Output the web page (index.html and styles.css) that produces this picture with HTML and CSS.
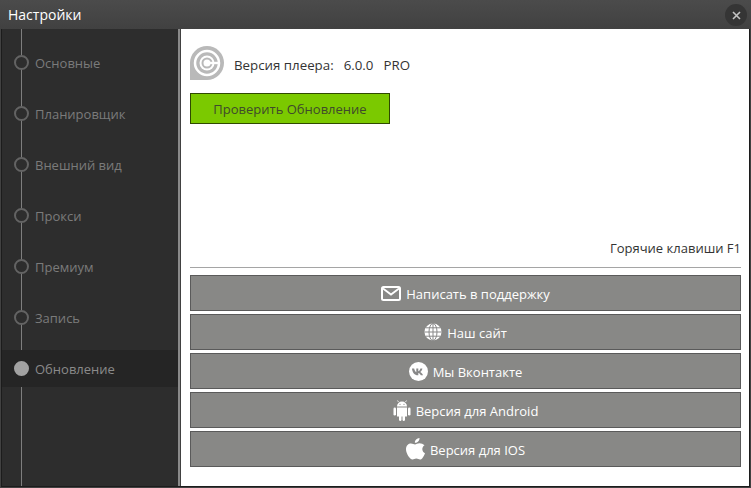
FILE: index.html
```html
<!DOCTYPE html>
<html lang="ru">
<head>
    <meta charset="UTF-8">
    <link rel="stylesheet" href="styles.css">
    <title>Настройки</title>
</head>
<body>
    <div class="window">
        <div class="titlebar">
            <span class="title">Настройки</span>
            <span class="close">
                <svg width="9" height="9" viewBox="0 0 9 9"><path d="M1 1l7 7M8 1l-7 7" stroke="#c4c4c4" stroke-width="1.6" fill="none"/></svg>
            </span>
        </div>
        <div class="main">
            <div class="sidebar">
                <div class="navline"></div>
                <div class="navitem"><span class="dot"></span>Основные</div>
                <div class="navitem"><span class="dot"></span>Планировщик</div>
                <div class="navitem"><span class="dot"></span>Внешний вид</div>
                <div class="navitem"><span class="dot"></span>Прокси</div>
                <div class="navitem"><span class="dot"></span>Премиум</div>
                <div class="navitem"><span class="dot"></span>Запись</div>
                <div class="navitem active"><span class="dot"></span>Обновление</div>
            </div>
            <div class="content">
                <div class="version">
                    <svg class="logo" width="34" height="34" viewBox="0 0 34 34">
                        <path d="M0 34V17a17 17 0 1 1 17 17z" fill="#b9b9b9"/>
                        <circle cx="17" cy="17" r="12" fill="none" stroke="#fff" stroke-width="2.5"/>
                        <circle cx="17" cy="17" r="7.5" fill="#fff"/>
                        <circle cx="17" cy="17" r="4.5" fill="none" stroke="#b9b9b9" stroke-width="2"/>
                        <path d="M17 15.800h12v2.400h-12z" fill="#fff"/>
                    </svg>
                    <span class="vertext">Версия плеера:</span>
                    <span class="vertext vernum">6.0.0</span>
                    <span class="vertext vernum">PRO</span>
                </div>
                <div class="checkbtn">Проверить Обновление</div>
                <div class="hotkeys">Горячие клавиши F1</div>
                <div class="links">
                    <div class="linkbtn">
                        <svg width="20" height="15" viewBox="0 0 20 15"><rect x="1" y="1" width="18" height="13" rx="1.500" fill="none" stroke="#fff" stroke-width="2"/><path d="M2 2.500l8 6 8-6" fill="none" stroke="#fff" stroke-width="1.800"/></svg>
                        <span class="linktext">Написать в поддержку</span>
                    </div>
                    <div class="linkbtn">
                        <svg width="18" height="18" viewBox="0 0 18 18"><circle cx="9" cy="9" r="8.500" fill="#fff"/><g fill="none" stroke="#888" stroke-width="1"><ellipse cx="9" cy="9" rx="4" ry="8.500"/><path d="M9 .5v17M.5 9h17M2 4.800h14M2 13.200h14"/></g></svg>
                        <span class="linktext">Наш сайт</span>
                    </div>
                    <div class="linkbtn">
                        <svg width="19" height="19" viewBox="0 0 19 19"><circle cx="9.500" cy="9.500" r="9.500" fill="#fff"/><path d="M3 6.500h2.200c.4 2 1.300 3.500 2.100 3.700V6.500h2v2.800c.8-.1 1.700-1.300 2.100-2.800h2c-.3 1.700-1.300 3-2.200 3.600 1 .5 2.200 1.600 2.800 3.200h-2.200c-.4-1.200-1.500-2.200-2.500-2.300v2.300H8.800C5.700 13.300 3.300 10.500 3 6.500z" fill="#888"/></svg>
                        <span class="linktext">Мы Вконтакте</span>
                    </div>
                    <div class="linkbtn">
                        <svg width="18" height="21" viewBox="0 0 18 21"><g fill="#fff"><path d="M4 6.500a5 5 0 0 1 10 0z"/><path d="M4 7.500h10v9H12v3.500a1.300 1.300 0 0 1-2.500 0v-3.500H8.500v3.500a1.300 1.300 0 0 1-2.500 0v-3.500H4z"/><rect x="0.500" y="7.500" width="2.500" height="8" rx="1.250"/><rect x="15" y="7.500" width="2.500" height="8" rx="1.250"/></g><path d="M5.500 2L4.500 .5M12.500 2l1-1.500" stroke="#fff" stroke-width=".8"/><circle cx="7" cy="4.300" r=".6" fill="#888"/><circle cx="11" cy="4.300" r=".6" fill="#888"/></svg>
                        <span class="linktext">Версия для Android</span>
                    </div>
                    <div class="linkbtn">
                        <svg width="19" height="22" viewBox="0 0 19 22"><path fill="#fff" d="M13.500 0c.1 2.800-2.300 5-4.600 4.800C8.700 2.500 11 .2 13.500 0zM18.500 7.200c-3.200 2-2.700 6.500.5 8-.9 2.500-2.700 6.300-5 6.300-1.300 0-2-.9-3.700-.9s-2.400.9-3.700.9C3.800 21.500 0 15.500 0 11.300 0 7.500 2.500 5.500 5 5.500c1.600 0 2.900 1 4 1s2.500-1.200 4.400-1.200c1.900 0 3.800.8 5.100 1.900z"/></svg>
                        <span class="linktext">Версия для IOS</span>
                    </div>
                </div>
            </div>
        </div>
    </div>
</body>
</html>
```

FILE: styles.css
```css
html, body {
    margin: 0;
    padding: 0;
    height: 100%;
    overflow: hidden;
    font-family: "Open Sans", sans-serif;
    font-size: 13px;
}
.window {
    width: 751px;
    height: 488px;
    box-sizing: border-box;
    display: flex;
    flex-direction: column;
    background-color: #414141;
    border-bottom: 1px solid #414141;
}
.titlebar {
    height: 29px;
    flex-shrink: 0;
    display: flex;
    align-items: center;
    justify-content: space-between;
    padding: 0 0 0 8px;
    background: linear-gradient(#4b4b4b, #414141);
    color: #fff;
}
.title {
    font-size: 14px;
}
.close {
    width: 22px;
    height: 22px;
    margin-right: 4px;
    margin-top: 1px;
    border-radius: 50%;
    background-color: #353535;
    display: flex;
    align-items: center;
    justify-content: center;
}
.main {
    flex: 1;
    display: flex;
    margin: 0 1px;
    min-height: 0;
    border: 1px solid #1c1c1c;
    border-top: 0;
}
.sidebar {
    position: relative;
    width: 178px;
    flex-shrink: 0;
    padding-top: 15px;
    box-sizing: border-box;
    display: flex;
    flex-direction: column;
    gap: 14px;
    background-color: #2d2d2d;
    border-right: 2px solid #8a8a8a;
}
.navline {
    position: absolute;
    left: 19px;
    top: 0;
    bottom: 0;
    width: 1px;
    background-color: #7e7e7e;
}
.navitem {
    position: relative;
    height: 37px;
    display: flex;
    align-items: center;
    padding-left: 12px;
    color: #7b7b7b;
}
.dot {
    width: 11px;
    height: 11px;
    margin-right: 6px;
    border: 2px solid #636363;
    border-radius: 50%;
    background-color: #2d2d2d;
}
.navitem.active {
    background-color: #252525;
    color: #8a8a8a;
}
.active .dot {
    background-color: #a2a2a2;
    border-color: #a2a2a2;
}
.content {
    flex: 1;
    display: flex;
    flex-direction: column;
    padding: 17px 8px 0 9px;
    margin-left: 1px;
    background-color: #fff;
    color: #333;
}
.version {
    display: flex;
    align-items: center;
    height: 34px;
}
.logo {
    margin-right: 10px;
}
.vertext {
    padding-top: 3px;
    font-size: 13.3px;
}
.vernum {
    margin-left: 10px;
}
.checkbtn {
    width: 198px;
    height: 29px;
    margin-top: 13px;
    border: 1px solid #2f4a00;
    background-color: #7bc900;
    color: #3f4a2c;
    display: flex;
    align-items: center;
    justify-content: center;
}
.hotkeys {
    margin-top: 114px;
    height: 20px;
    line-height: 20px;
    text-align: right;
    padding-bottom: 9px;
    border-bottom: 1px solid #a5a5a5;
}
.links {
    margin-top: 7px;
    display: flex;
    flex-direction: column;
    gap: 3px;
}
.linkbtn {
    height: 34px;
    border: 1px solid #5a5a5a;
    background-color: #888886;
    color: #fff;
    display: flex;
    align-items: center;
    justify-content: center;
    gap: 5px;
}
.linktext {
    padding-top: 2px;
}
```
